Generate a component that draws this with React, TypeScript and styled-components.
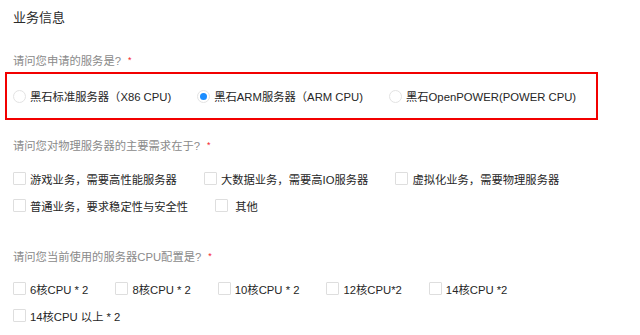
import React from 'react';
import styled, { createGlobalStyle } from 'styled-components';

const GlobalStyle = createGlobalStyle`
  html, body {
    margin: 0;
    padding: 0;
    background: #fff;
  }
  body {
    font-family: 'Liberation Sans', 'Noto Sans CJK SC', sans-serif;
    color: #333;
  }
`;

const Page = styled.div`
  width: 640px;
  height: 335px;
  overflow: hidden;
  padding: 8px 0 0 13px;
  box-sizing: border-box;
`;

const Title = styled.div`
  font-size: 13px;
  line-height: 20px;
  color: #2b2b2b;
`;

const Question = styled.div<{ $top: number }>`
  margin-top: ${(p) => p.$top}px;
  font-size: 11.3px;
  line-height: 16px;
  color: #8a8a8a;
  white-space: nowrap;

  > span {
    color: #f5222d;
    font-size: 9px;
    margin-left: 7px;
    position: relative;
    top: -2px;
  }
`;

const Highlight = styled.div`
  margin: 2px 0 0 -8px;
  width: 593px;
  height: 48px;
  box-sizing: border-box;
  border: 2px solid #f20000;
  display: flex;
  align-items: center;
  padding: 0 0 0 6px;
  gap: 26px;
`;

const Options = styled.div<{ $top: number }>`
  margin-top: ${(p) => p.$top}px;
  width: 600px;
  display: flex;
  flex-wrap: wrap;
  column-gap: 27px;
`;

const Option = styled.label`
  display: flex;
  align-items: center;
  height: 27px;
  font-size: 11.3px;
  color: #262626;
  white-space: nowrap;
  gap: 4px;
`;

const Box = styled.span`
  width: 13px;
  height: 13px;
  box-sizing: border-box;
  border: 1px solid #dedede;
  border-radius: 1px;
  background: #fff;
`;

const Radio = styled.span<{ $checked?: boolean }>`
  width: 13px;
  height: 13px;
  box-sizing: border-box;
  border: 1px solid #e3e3e3;
  border-radius: 50%;
  background: #fff;
  display: flex;
  align-items: center;
  justify-content: center;

  &:after {
    content: '';
    display: ${(p) => (p.$checked ? 'block' : 'none')};
    width: 7px;
    height: 7px;
    border-radius: 50%;
    background: #1a8cff;
  }
`;

const services = [
  { label: '黑石标准服务器（X86 CPU)', checked: false },
  { label: '黑石ARM服务器（ARM CPU)', checked: true },
  { label: '黑石OpenPOWER(POWER CPU)', checked: false },
];

const needs = [
  '游戏业务，需要高性能服务器',
  '大数据业务，需要高IO服务器',
  '虚拟化业务，需要物理服务器',
  '普通业务，要求稳定性与安全性',
  '\u00a0其他',
];

const cpus = [
  '6核CPU * 2',
  '8核CPU * 2',
  '10核CPU * 2',
  '12核CPU*2',
  '14核CPU *2',
  '14核CPU 以上 * 2',
];

const App = () => {
  return (
    <Page>
      <GlobalStyle />
      <Title>业务信息</Title>

      <Question $top={25}>
        请问您申请的服务是?<span>*</span>
      </Question>
      <Highlight>
        {services.map((s) => (
          <Option key={s.label}>
            <Radio $checked={s.checked} />
            {s.label}
          </Option>
        ))}
      </Highlight>

      <Question $top={18}>
        请问您对物理服务器的主要需求在于?<span>*</span>
      </Question>
      <Options $top={10}>
        {needs.map((n) => (
          <Option key={n}>
            <Box />
            {n}
          </Option>
        ))}
      </Options>

      <Question $top={30}>
        请问您当前使用的服务器CPU配置是?<span>*</span>
      </Question>
      <Options $top={9}>
        {cpus.map((c) => (
          <Option key={c}>
            <Box />
            {c}
          </Option>
        ))}
      </Options>
    </Page>
  );
};

export default App;
